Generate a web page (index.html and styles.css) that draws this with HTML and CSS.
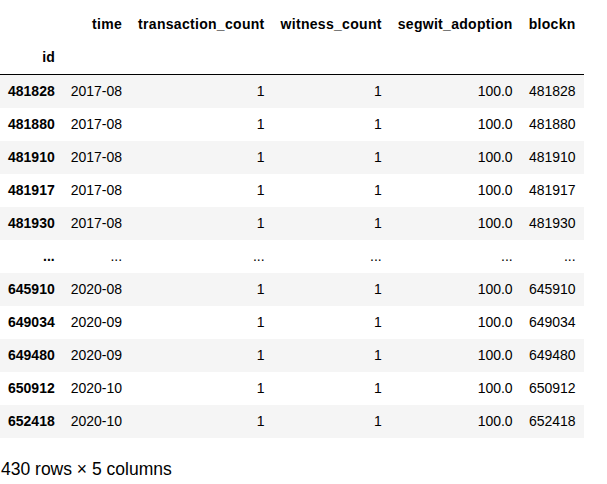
FILE: index.html
```html
<!DOCTYPE html>
<html>
<head>
<meta charset="utf-8">
<link rel="stylesheet" href="styles.css">
</head>
<body>
<div class="output">
<table class="dataframe">
<thead>
<tr class="cols"><th></th><th>time</th><th>transaction_count</th><th>witness_count</th><th>segwit_adoption</th><th>blockn</th></tr>
<tr class="idx"><th>id</th><th></th><th></th><th></th><th></th><th></th></tr>
</thead>
<tbody>
<tr><th>481828</th><td>2017-08</td><td>1</td><td>1</td><td>100.0</td><td>481828</td></tr>
<tr><th>481880</th><td>2017-08</td><td>1</td><td>1</td><td>100.0</td><td>481880</td></tr>
<tr><th>481910</th><td>2017-08</td><td>1</td><td>1</td><td>100.0</td><td>481910</td></tr>
<tr><th>481917</th><td>2017-08</td><td>1</td><td>1</td><td>100.0</td><td>481917</td></tr>
<tr><th>481930</th><td>2017-08</td><td>1</td><td>1</td><td>100.0</td><td>481930</td></tr>
<tr><th>...</th><td>...</td><td>...</td><td>...</td><td>...</td><td>...</td></tr>
<tr><th>645910</th><td>2020-08</td><td>1</td><td>1</td><td>100.0</td><td>645910</td></tr>
<tr><th>649034</th><td>2020-09</td><td>1</td><td>1</td><td>100.0</td><td>649034</td></tr>
<tr><th>649480</th><td>2020-09</td><td>1</td><td>1</td><td>100.0</td><td>649480</td></tr>
<tr><th>650912</th><td>2020-10</td><td>1</td><td>1</td><td>100.0</td><td>650912</td></tr>
<tr><th>652418</th><td>2020-10</td><td>1</td><td>1</td><td>100.0</td><td>652418</td></tr>
</tbody>
</table>
<p class="shape">430 rows × 5 columns</p>
</div>
</body>
</html>
```
FILE: styles.css
```css
html, body {
  margin: 0;
  padding: 0;
  background: #fff;
}
body {
  font-family: "Liberation Sans", Arial, sans-serif;
  color: #000;
}
.output {
  padding: 8px 0 0 0;
}
.dataframe {
  border-collapse: collapse;
  border-spacing: 0;
  font-size: 14px;
}
.dataframe th,
.dataframe td {
  text-align: right;
  vertical-align: middle;
  padding: 8px 8px;
  line-height: 17px;
  white-space: nowrap;
}
.dataframe th {
  font-weight: bold;
}
.dataframe thead tr.cols th {
  letter-spacing: 0.3px;
}
.dataframe thead tr.idx th {
  border-bottom: 1px solid #000;
}
.dataframe tbody tr:nth-child(odd) {
  background: #f5f5f5;
}
.shape {
  margin: 21px 0 0 1px;
  font-size: 17.5px;
  line-height: 20px;
}
```
